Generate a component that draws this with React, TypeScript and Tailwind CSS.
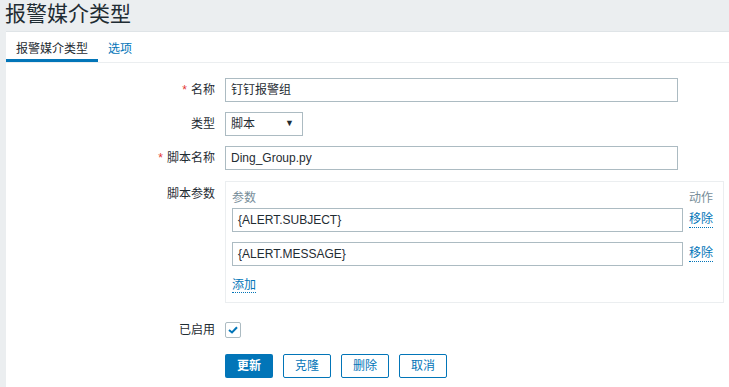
import { useState } from "react";

const font = { fontFamily: '"Liberation Sans", Arial, "Noto Sans CJK SC", sans-serif' };

function Label({ text, required }: { text: string; required?: boolean }) {
  return (
    <div className="flex w-[209px] shrink-0 justify-end pr-0 text-[12px] text-[#1f2c33]">
      {required && <span className="mr-[4px] text-[#e33734]">*</span>}
      {text}
    </div>
  );
}

function TextInput({ value, className }: { value: string; className: string }) {
  return (
    <div
      className={`flex h-[24px] items-center border border-[#acbbc2] bg-white px-[5px] text-[12px] text-[#1f2c33] ${className}`}
    >
      {value}
    </div>
  );
}

function DottedLink({ text }: { text: string }) {
  return (
    <span className="border-b border-dotted border-[#0275b8] leading-[15px] text-[#0275b8]">
      {text}
    </span>
  );
}

export default function App() {
  const [enabled] = useState(true);
  const params = ["{ALERT.SUBJECT}", "{ALERT.MESSAGE}"];

  return (
    <div className="h-screen overflow-hidden bg-[#ebeef0]" style={font}>
      <div className="h-[31px] px-[5px] pt-[1px] text-[21px] leading-[26px] text-[#1f2c33]">
        报警媒介类型
      </div>
      <div className="ml-[6px] h-full border-t border-[#dfe4e7] bg-white">
        <div className="flex h-[31px] border-b border-[#ebeef0] text-[12px]">
          <div className="flex w-[92px] flex-col items-center">
            <div className="flex-1 pt-[8px] text-[#1f2c33]">报警媒介类型</div>
            <div className="h-[3px] w-full bg-[#0275b8]" />
          </div>
          <div className="px-[10px] pt-[8px] text-[#0275b8]">选项</div>
        </div>

        <div className="flex flex-col pt-[15px]">
          <div className="flex items-center gap-[10px]">
            <Label text="名称" required />
            <TextInput value="钉钉报警组" className="w-[453px]" />
          </div>

          <div className="mt-[10px] flex items-center gap-[10px]">
            <Label text="类型" />
            <div className="flex h-[24px] w-[78px] items-center justify-between border border-[#acbbc2] pl-[5px] pr-[8px] text-[12px] text-[#1f2c33]">
              <span>脚本</span>
              <span className="text-[9px]">▼</span>
            </div>
          </div>

          <div className="mt-[10px] flex items-center gap-[10px]">
            <Label text="脚本名称" required />
            <TextInput value="Ding_Group.py" className="w-[453px]" />
          </div>

          <div className="mt-[11px] flex items-start gap-[10px]">
            <div className="pt-[4px]">
              <Label text="脚本参数" />
            </div>
            <div className="flex h-[122px] w-[499px] flex-col border border-[#ebeef0] pl-[6px] pr-[10px] pt-[5px] text-[12px]">
              <div className="flex h-[21px] items-center justify-between text-[#768d99]">
                <span>参数</span>
                <span>动作</span>
              </div>
              {params.map(p => (
                <div key={p} className="mb-[10px] flex items-center gap-[6px]">
                  <TextInput value={p} className="flex-1" />
                  <DottedLink text="移除" />
                </div>
              ))}
              <div>
                <DottedLink text="添加" />
              </div>
            </div>
          </div>

          <div className="mt-[18px] flex items-center gap-[10px]">
            <Label text="已启用" />
            <div className="flex h-[16px] w-[16px] items-center justify-center rounded-[2px] border border-[#acbbc2] bg-white">
              {enabled && (
                <svg width="10" height="8" viewBox="0 0 10 8">
                  <path d="M1 4 L4 6.5 L9 1.2" fill="none" stroke="#0275b8" strokeWidth="2" />
                </svg>
              )}
            </div>
          </div>

          <div className="mt-[15px] flex gap-[10px] pl-[219px] text-[12px]">
            <button className="h-[24px] w-[48px] rounded-[2px] bg-[#0275b8] font-bold text-white">
              更新
            </button>
            {["克隆", "删除", "取消"].map(b => (
              <button
                key={b}
                className="h-[24px] w-[48px] rounded-[2px] border border-[#0275b8] bg-white text-[#0275b8]"
              >
                {b}
              </button>
            ))}
          </div>
        </div>
      </div>
    </div>
  );
}
